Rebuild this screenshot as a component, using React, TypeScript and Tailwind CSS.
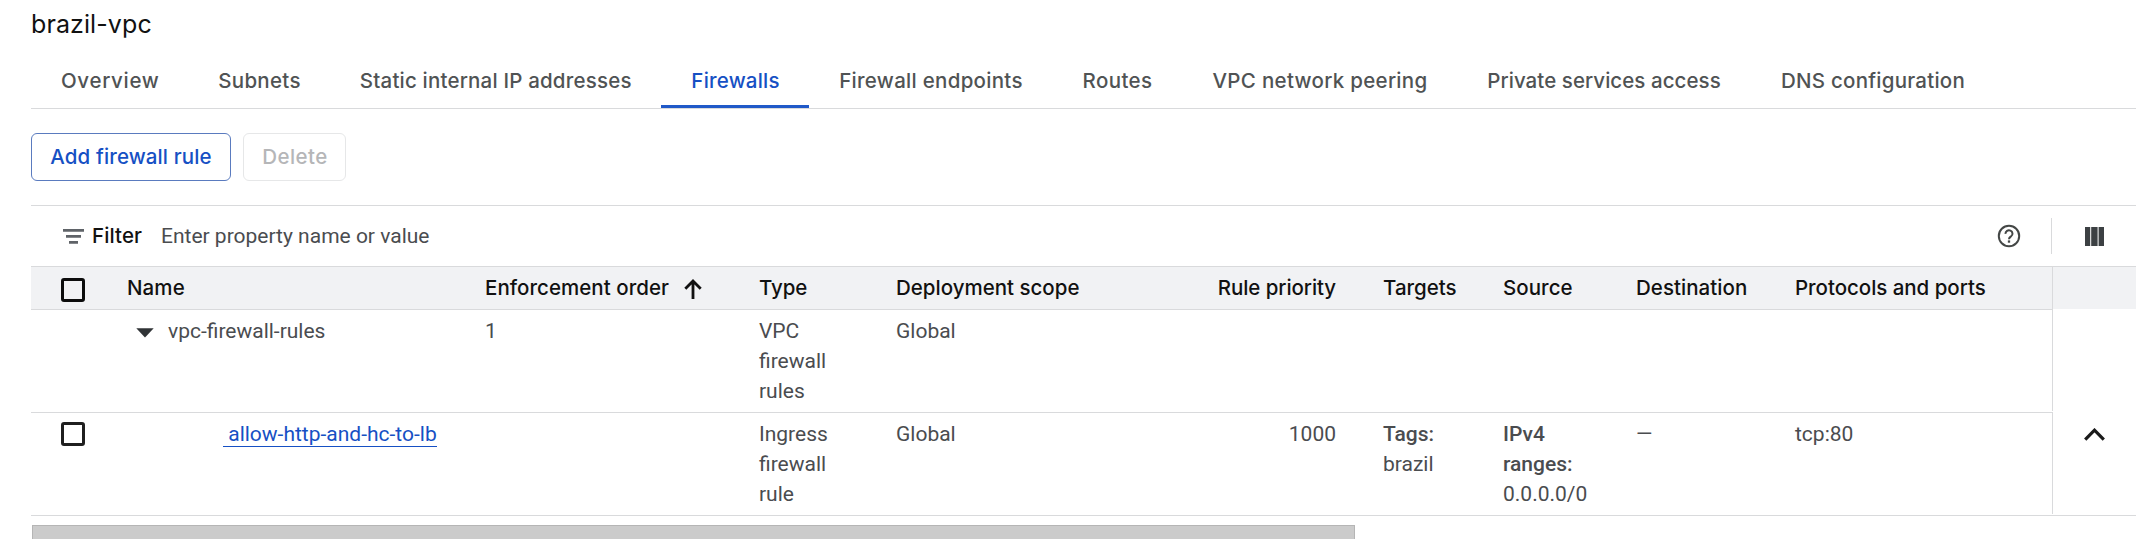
import type { ReactNode } from "react";

const tabs = [
  { label: "Overview", cls: "w-[157.5px] tracking-[0.7px]" },
  { label: "Subnets", cls: "w-[141px] tracking-[0.3px]" },
  { label: "Static internal IP addresses", cls: "w-[331.5px] tracking-[0.19px]" },
  { label: "Firewalls", cls: "w-[148px] tracking-[0.2px]", active: true },
  { label: "Firewall endpoints", cls: "w-[243px] tracking-[0.29px]" },
  { label: "Routes", cls: "w-[130px] tracking-[0.4px]" },
  { label: "VPC network peering", cls: "w-[275px] tracking-[0.3px]" },
  { label: "Private services access", cls: "w-[293px] tracking-[0.06px]" },
  { label: "DNS configuration", cls: "w-[245px] tracking-[0.25px]" },
];

const columns =
  "grid grid-cols-[96px_358px_274px_137px_239px_249px_120px_132px_159px_257px]";

function Checkbox({ className }: { className: string }) {
  return (
    <span
      role="checkbox"
      aria-checked="false"
      className={`ml-[30px] block size-6 rounded-[3px] border-[3px] ${className}`}
    />
  );
}

function FilterIcon() {
  return (
    <svg width="21" height="15" viewBox="0 0 21 15" fill="#5f6368">
      <path d="M0 0h21v2.8H0zM3 6h15v2.8H3zM6 12h9v2.8H6z" />
    </svg>
  );
}

function HelpIcon() {
  return (
    <svg width="24" height="24" viewBox="0 0 24 24" fill="none" stroke="#444746">
      <circle cx="12" cy="12" r="10.2" strokeWidth="2" />
      <path
        d="M8.5 9.9a3.5 3.3 0 1 1 5.6 2.4c-1.3 1-2.1 1.4-2.1 2.9"
        strokeWidth="2"
      />
      <path d="M12 16.4v2.3" strokeWidth="2.3" />
    </svg>
  );
}

function ColumnsIcon() {
  return (
    <svg width="19" height="19" viewBox="0 0 19 19" fill="#3c4043">
      <path d="M0 0h5.2v19H0zM6.2 0h6.4v19H6.2zM13.6 0H19v19h-5.4z" />
    </svg>
  );
}

function ArrowUp() {
  return (
    <svg width="18" height="20" viewBox="0 0 18 20" fill="none" stroke="#111" strokeWidth="2.8">
      <path d="M9 20V2M1.3 9.7 9 2l7.7 7.7" />
    </svg>
  );
}

function Chevron() {
  return (
    <svg width="21" height="13" viewBox="0 0 21 13" fill="none" stroke="#1a1a1a" strokeWidth="3.2">
      <path d="M1.2 11.6 10.5 2.2l9.3 9.4" />
    </svg>
  );
}

function Head({ children, className = "" }: { children?: ReactNode; className?: string }) {
  return (
    <div
      className={`font-[Inter,sans-serif] text-[20.5px] leading-[41px] font-medium whitespace-nowrap text-[#111] ${className}`}
    >
      {children}
    </div>
  );
}

export default function App() {
  return (
    <main className="h-[558px] w-[2142px] overflow-hidden bg-white pl-[31px] pr-[6px] font-[Roboto,sans-serif] text-[21px] leading-[30px] text-[#4a4c4f]">
      <h1 className="h-[55px] pt-2 font-[Inter,sans-serif] text-[25px] leading-8 tracking-[0.1px] text-[#111]">
        brazil-vpc
      </h1>

      <nav className="flex h-[54px] border-b border-[#d9dadc] font-[Inter,sans-serif] text-[20.5px] font-medium text-[#505354]">
        {tabs.map((t) => (
          <div
            key={t.label}
            className={`h-[53px] shrink-0 border-b-[3px] pt-[11px] pl-px text-center whitespace-nowrap ${t.cls} ${
              t.active ? "border-[#2059c8] text-[#1650c4]" : "border-transparent"
            }`}
          >
            {t.label}
          </div>
        ))}
      </nav>

      <div className="mt-6 flex h-12 gap-3 font-[Inter,sans-serif] text-[20.5px] font-medium">
        <button className="w-[200px] rounded-[6px] border border-[#5a7bbf] tracking-[0.12px] whitespace-nowrap text-[#1650c4]">
          Add firewall rule
        </button>
        <button className="w-[103px] rounded-[6px] border border-[#e6e7e8] pl-px tracking-[0.45px] text-[#b5b6b8]">
          Delete
        </button>
      </div>

      <section className="mt-6 border-t border-[#d9dadc]">
        <div className="flex h-[60px] items-center pl-8">
          <FilterIcon />
          <span className="ml-2 w-[69px] font-[Inter,sans-serif] text-[20.5px] font-medium tracking-[0.1px] text-[#111]">
            Filter
          </span>
          <span>Enter property name or value</span>
          <div className="ml-auto flex items-center">
            <HelpIcon />
            <span className="ml-[30px] h-9 w-px bg-[#d9dadc]" />
            <span className="ml-[33px] mr-8">
              <ColumnsIcon />
            </span>
          </div>
        </div>

        <div className="flex">
          <div className="w-[2021px]">
            <div className={`${columns} h-11 border-y border-[#d9dadc] bg-[#f1f2f4]`}>
              <div className="pt-[11px]">
                <Checkbox className="border-[#0c0c0c]" />
              </div>
              <Head className="tracking-[0.1px]">Name</Head>
              <Head className="flex tracking-[0.04px]">
                Enforcement order
                <span className="ml-[15px] mt-3">
                  <ArrowUp />
                </span>
              </Head>
              <Head className="tracking-[-0.1px]">Type</Head>
              <Head>Deployment scope</Head>
              <Head className="pr-12 text-right tracking-[-0.08px]">Rule priority</Head>
              <Head className="-ml-px">Targets</Head>
              <Head className="-ml-px tracking-[0.05px]">Source</Head>
              <Head className="tracking-[0.04px]">Destination</Head>
              <Head className="tracking-[-0.04px]">Protocols and ports</Head>
            </div>

            <div className={`${columns} h-[103px] border-b border-[#d9dadc] pt-[6px]`}>
              <div />
              <div className="flex items-start">
                <svg className="ml-[9px] mt-3 mr-[14px]" width="18" height="10" viewBox="0 0 18 10" fill="#303336">
                  <path d="M.3.3h17.4L9 9.4z" />
                </svg>
                vpc-firewall-rules
              </div>
              <div>1</div>
              <div className="w-[90px]">VPC firewall rules</div>
              <div>Global</div>
            </div>

            <div className={`${columns} h-[103px] border-b border-[#d9dadc] pt-[6px]`}>
              <div className="pt-[3px]">
                <Checkbox className="border-[#1f1f1f]" />
              </div>
              <div className="pl-24">
                <a className="border-b border-[#1650c4] whitespace-nowrap text-[#1650c4]">
                  &nbsp;allow-http-and-hc-to-lb
                </a>
              </div>
              <div />
              <div className="w-[90px]">Ingress firewall rule</div>
              <div>Global</div>
              <div className="pr-12 text-right">1000</div>
              <div className="-ml-px">
                <div className="font-medium">Tags:</div>
                brazil
              </div>
              <div className="-ml-px">
                <div className="font-medium">IPv4</div>
                <div className="font-medium">ranges:</div>
                0.0.0.0/0
              </div>
              <div>—</div>
              <div>tcp:80</div>
            </div>
          </div>

          <div className="w-[84px]">
            <div className="h-[43px] border-t border-l border-[#d9dadc] bg-[#f1f2f4]" />
            <div className="h-[102px] border-l border-[#d9dadc]" />
            <div className="mt-px h-[102px] border-l border-[#d9dadc] pt-4 pl-[31px]">
              <Chevron />
            </div>
            <div className="mt-px h-px bg-[#d9dadc]" />
          </div>
        </div>
      </section>

      <div className="mt-[9px] ml-px h-[14px] w-[1323px] border-x border-t border-[#b5b5b5] bg-[#cbcbcb]" />
    </main>
  );
}
